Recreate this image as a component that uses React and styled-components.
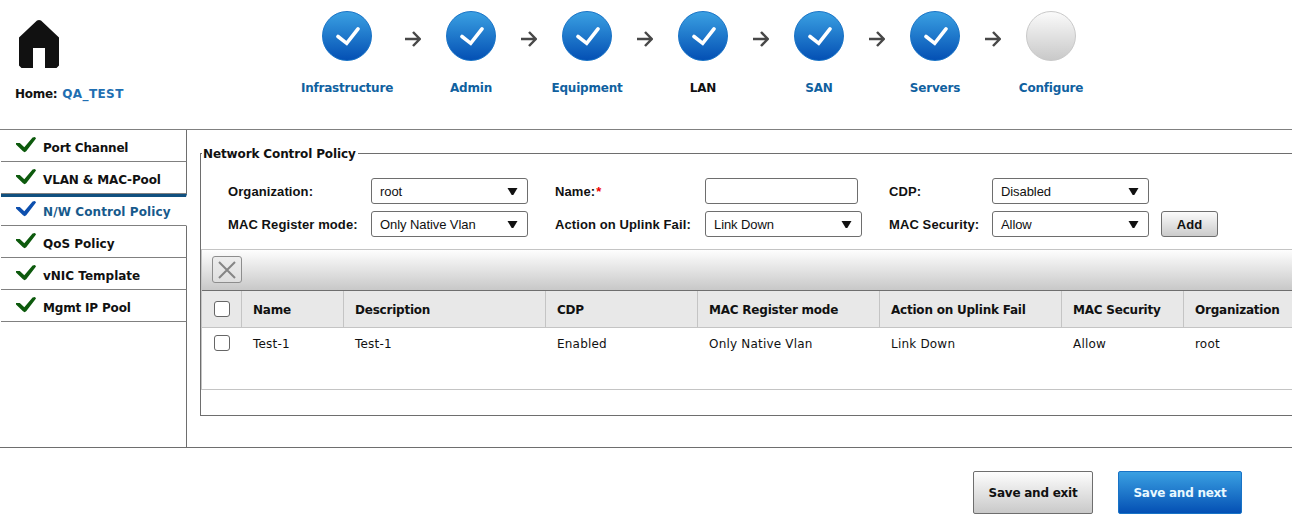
import React from "react";
import styled, { createGlobalStyle } from "styled-components";

const Global = createGlobalStyle`
  * { box-sizing: border-box; }
  body { margin: 0; background: #fff; overflow: hidden; }
  button { font: inherit; margin: 0; }
`;

const Page = styled.div`
  width: 1292px;
  height: 518px;
  overflow: hidden;
  background: #fff;
  color: #111;
  font: 12px/16px "DejaVu Sans", Verdana, sans-serif;
  white-space: nowrap;
  svg { display: block; }
`;

const Header = styled.header`
  display: flex;
  height: 129px;
`;

const Home = styled.div`
  width: 297px;
  padding: 19px 0 0 15px;
  font-weight: bold;
  letter-spacing: -0.28px;
  svg { margin: 0 0 17px 3px; }
  a { color: #1f6fb2; margin-left: 1px; letter-spacing: 0.4px; }
`;

const Steps = styled.nav`
  display: flex;
`;

const Step = styled.div`
  width: 100px;
  padding-top: 11px;
  display: flex;
  flex-direction: column;
  align-items: center;
  gap: 19px;
  color: ${(p) => (p.$current ? "#111" : "#10619f")};
  font-weight: bold;
  letter-spacing: -0.2px;
  &:first-child { margin-right: 8px; }
`;

const Disc = styled.div`
  width: 50px;
  height: 50px;
  border-radius: 50%;
  display: grid;
  place-items: center;
  border: 1px solid ${(p) => (p.$done ? "#1873c6" : "#c9c9c9")};
  background: ${(p) =>
    p.$done
      ? "linear-gradient(#3aa0e2, #0450b4)"
      : "linear-gradient(#fafafa, #c9c9c9)"};
`;

const ArrowBox = styled.div`
  width: 16px;
  padding-top: 31px;
`;

const Main = styled.main`
  display: flex;
  height: 319px;
  border-top: 1px solid #808080;
  border-bottom: 1px solid #6e6e6e;
`;

const Sidebar = styled.aside`
  width: 187px;
  display: flex;
  flex-direction: column;
`;

const SideItem = styled.div`
  height: 32px;
  flex: none;
  margin-left: 1px;
  display: flex;
  align-items: center;
  gap: 7px;
  padding: ${(p) => (p.$active ? "2px 0 0 15px" : "5px 0 0 15px")};
  border-top: ${(p) => (p.$active ? "3px solid #10507f" : "none")};
  border-bottom: 1px solid #808080;
  border-right: 1px solid ${(p) => (p.$active ? "transparent" : "#6e6e6e")};
  color: ${(p) => (p.$active ? "#175a8c" : "#111")};
  font-weight: bold;
  letter-spacing: ${(p) => p.$track}px;
  svg { margin-top: -7px; }
`;

const SideRest = styled.div`
  flex: 1;
  border-right: 1px solid #6e6e6e;
`;

const Content = styled.section`
  flex: 1;
  min-width: 0;
  padding: 15px 0 0 13px;
  overflow: hidden;
`;

const Panel = styled.fieldset`
  margin: 0;
  padding: 0;
  min-width: 0;
  height: 271px;
  border: 1px solid #6e6e6e;
  border-right: 0;
`;

const Legend = styled.legend`
  height: 16px;
  line-height: 18px;
  margin-left: 1px;
  padding: 0 2px 0 1px;
  font-weight: bold;
  letter-spacing: -0.12px;
`;

const Form = styled.div`
  display: grid;
  grid-template-columns: 143px 184px 150px 184px 103px 169px 57px;
  grid-auto-rows: 26px;
  row-gap: 7px;
  align-items: center;
  padding: 17px 0 12px 27px;
  font-family: "Liberation Sans", Arial, sans-serif;
`;

const Label = styled.label`
  padding-top: 1px;
  font-size: 13px;
  font-weight: bold;
  letter-spacing: 0.1px;
  span { color: #e00; margin-left: 1px; }
`;

const Box = styled.div`
  width: ${(p) => p.$width || 157}px;
  height: 26px;
  padding: 1px 9px 0 8px;
  display: flex;
  align-items: center;
  justify-content: space-between;
  border: 1px solid #6e6e6e;
  border-radius: 3px;
  background: #fff;
  font-size: 13px;
  letter-spacing: -0.08px;
`;

const AddButton = styled.button`
  width: 57px;
  height: 26px;
  padding: 1px 0 0;
  border: 1px solid #6e6e6e;
  border-radius: 3px;
  background: linear-gradient(#fbfbfb, #cbcbcb);
  color: #111;
  font-size: 13px;
  font-weight: bold;
`;

const Grid = styled.div`
  height: 141px;
  border: 1px solid #c4c4c4;
  border-right: 0;
`;

const Toolbar = styled.div`
  height: 41px;
  display: flex;
  align-items: center;
  padding: 0 0 1px 10px;
  border-bottom: 1px solid #6e6e6e;
  background: linear-gradient(#fefefe, #c8c8c8);
`;

const DeleteButton = styled.button`
  width: 30px;
  height: 27px;
  padding: 0;
  display: grid;
  place-items: center;
  border: 1px solid #8d8d8d;
  border-radius: 3px;
  background: linear-gradient(#ededed, #dfdfdf);
`;

const Row = styled.div`
  display: grid;
  grid-template-columns: 40px 102px 202px 152px 182px 182px 122px 140px;
  height: ${(p) => (p.$head ? 37 : 32)}px;
  background: ${(p) => (p.$head ? "#e8e8e8" : "#fff")};
  border-bottom: ${(p) => (p.$head ? "1px solid #c4c4c4" : "none")};
  font-weight: ${(p) => (p.$head ? "bold" : "normal")};
  letter-spacing: ${(p) => (p.$head ? "-0.22px" : "0.2px")};
`;

const Cell = styled.div`
  display: flex;
  align-items: center;
  padding: ${(p) => (p.$low ? "2px 0 0 11px" : "0 0 0 11px")};
  border-right: 1px solid ${(p) => (p.$line ? "#c4c4c4" : "transparent")};
`;

const Check = styled.span`
  width: 16px;
  height: 16px;
  margin: ${(p) => (p.$raised ? "-1px 0 1px 1px" : "0 0 0 1px")};
  border: 1px solid #666;
  border-radius: 3px;
  background: #fff;
`;

const Footer = styled.footer`
  display: flex;
  justify-content: flex-end;
  gap: 25px;
  padding: 23px 50px 0 0;
`;

const ActionButton = styled.button`
  width: ${(p) => (p.$primary ? 124 : 120)}px;
  height: 43px;
  padding: 0;
  border: 1px solid ${(p) => (p.$primary ? "#1873c6" : "#6e6e6e")};
  border-radius: 2px;
  background: ${(p) =>
    p.$primary
      ? "linear-gradient(#3aa0e2, #0450b4)"
      : "linear-gradient(#fdfdfd, #c9c9c9)"};
  color: ${(p) => (p.$primary ? "#e8f8ff" : "#111")};
  font-weight: bold;
  letter-spacing: -0.25px;
`;

const Tick = ({ color }) => (
  <svg width="20" height="16" viewBox="0 0 20 16">
    <path d="M0 6H3.8L8.3 10.2L16.6 .4L19 0L20 1.4L10.2 14.2L8.6 15.2L7 14.2L0 7.6Z" fill={color} />
  </svg>
);

const Arrow = () => (
  <svg width="16" height="16" viewBox="0 0 16 16" fill="none" stroke="#484848" strokeWidth="2.5">
    <path d="M0 8H14.5M8 1L14.8 8L8 15" />
  </svg>
);

const Select = ({ children }) => (
  <Box>
    {children}
    <svg width="11" height="8" viewBox="0 0 11 8">
      <path d="M.5 0H10.5L6.3 7H4.7Z" fill="#111" />
    </svg>
  </Box>
);

const steps = ["Infrastructure", "Admin", "Equipment", "LAN", "SAN", "Servers", "Configure"];
const sections = [
  { name: "Port Channel", track: -0.2 },
  { name: "VLAN & MAC-Pool", track: -0.13 },
  { name: "N/W Control Policy", track: 0.1 },
  { name: "QoS Policy", track: 0 },
  { name: "vNIC Template", track: 0 },
  { name: "Mgmt IP Pool", track: -0.18 },
];
const columns = ["Name", "Description", "CDP", "MAC Register mode", "Action on Uplink Fail", "MAC Security", "Organization"];
const policy = ["Test-1", "Test-1", "Enabled", "Only Native Vlan", "Link Down", "Allow", "root"];

export default function App() {
  return (
    <Page>
      <Global />
      <Header>
        <Home>
          <svg width="42" height="50" viewBox="0 0 42 50">
            <path d="M19 1.5Q21 .3 23 1.5L41 18.5V46.5L38.5 49H27V29H15V49H3.5L1 46.5V18.5Z" fill="#111" />
          </svg>
          Home: <a>QA_TEST</a>
        </Home>
        <Steps>
          {steps.map((name, i) => (
            <React.Fragment key={name}>
              {i > 0 && <ArrowBox><Arrow /></ArrowBox>}
              <Step $current={name === "LAN"}>
                <Disc $done={i < 6}>
                  {i < 6 && (
                    <svg width="26" height="22" viewBox="0 0 26 22" fill="none" stroke="#fff" strokeWidth="3.6" strokeLinecap="round">
                      <path d="M4 11.5L12.7 18.3L24 3.8" />
                    </svg>
                  )}
                </Disc>
                {name}
              </Step>
            </React.Fragment>
          ))}
        </Steps>
      </Header>
      <Main>
        <Sidebar>
          {sections.map(({ name, track }, i) => (
            <SideItem key={name} $active={i === 2} $track={track}>
              <Tick color={i === 2 ? "#0d4fae" : "#0d5a0d"} />
              {name}
            </SideItem>
          ))}
          <SideRest />
        </Sidebar>
        <Content>
          <Panel>
            <Legend>Network Control Policy</Legend>
            <Form>
              <Label>Organization:</Label>
              <Select>root</Select>
              <Label>Name:<span>*</span></Label>
              <Box $width={153} />
              <Label>CDP:</Label>
              <Select>Disabled</Select>
              <i />
              <Label>MAC Register mode:</Label>
              <Select>Only Native Vlan</Select>
              <Label>Action on Uplink Fail:</Label>
              <Select>Link Down</Select>
              <Label>MAC Security:</Label>
              <Select>Allow</Select>
              <AddButton>Add</AddButton>
            </Form>
            <Grid>
              <Toolbar>
                <DeleteButton>
                  <svg width="18" height="18" viewBox="0 0 18 18" stroke="#858585" strokeWidth="2">
                    <path d="M1 1L17 17M17 1L1 17" />
                  </svg>
                </DeleteButton>
              </Toolbar>
              <Row $head>
                <Cell $line><Check /></Cell>
                {columns.map((name) => <Cell key={name} $line $low>{name}</Cell>)}
              </Row>
              <Row>
                <Cell><Check $raised /></Cell>
                {policy.map((value, i) => <Cell key={i}>{value}</Cell>)}
              </Row>
            </Grid>
          </Panel>
        </Content>
      </Main>
      <Footer>
        <ActionButton>Save and exit</ActionButton>
        <ActionButton $primary>Save and next</ActionButton>
      </Footer>
    </Page>
  );
}
